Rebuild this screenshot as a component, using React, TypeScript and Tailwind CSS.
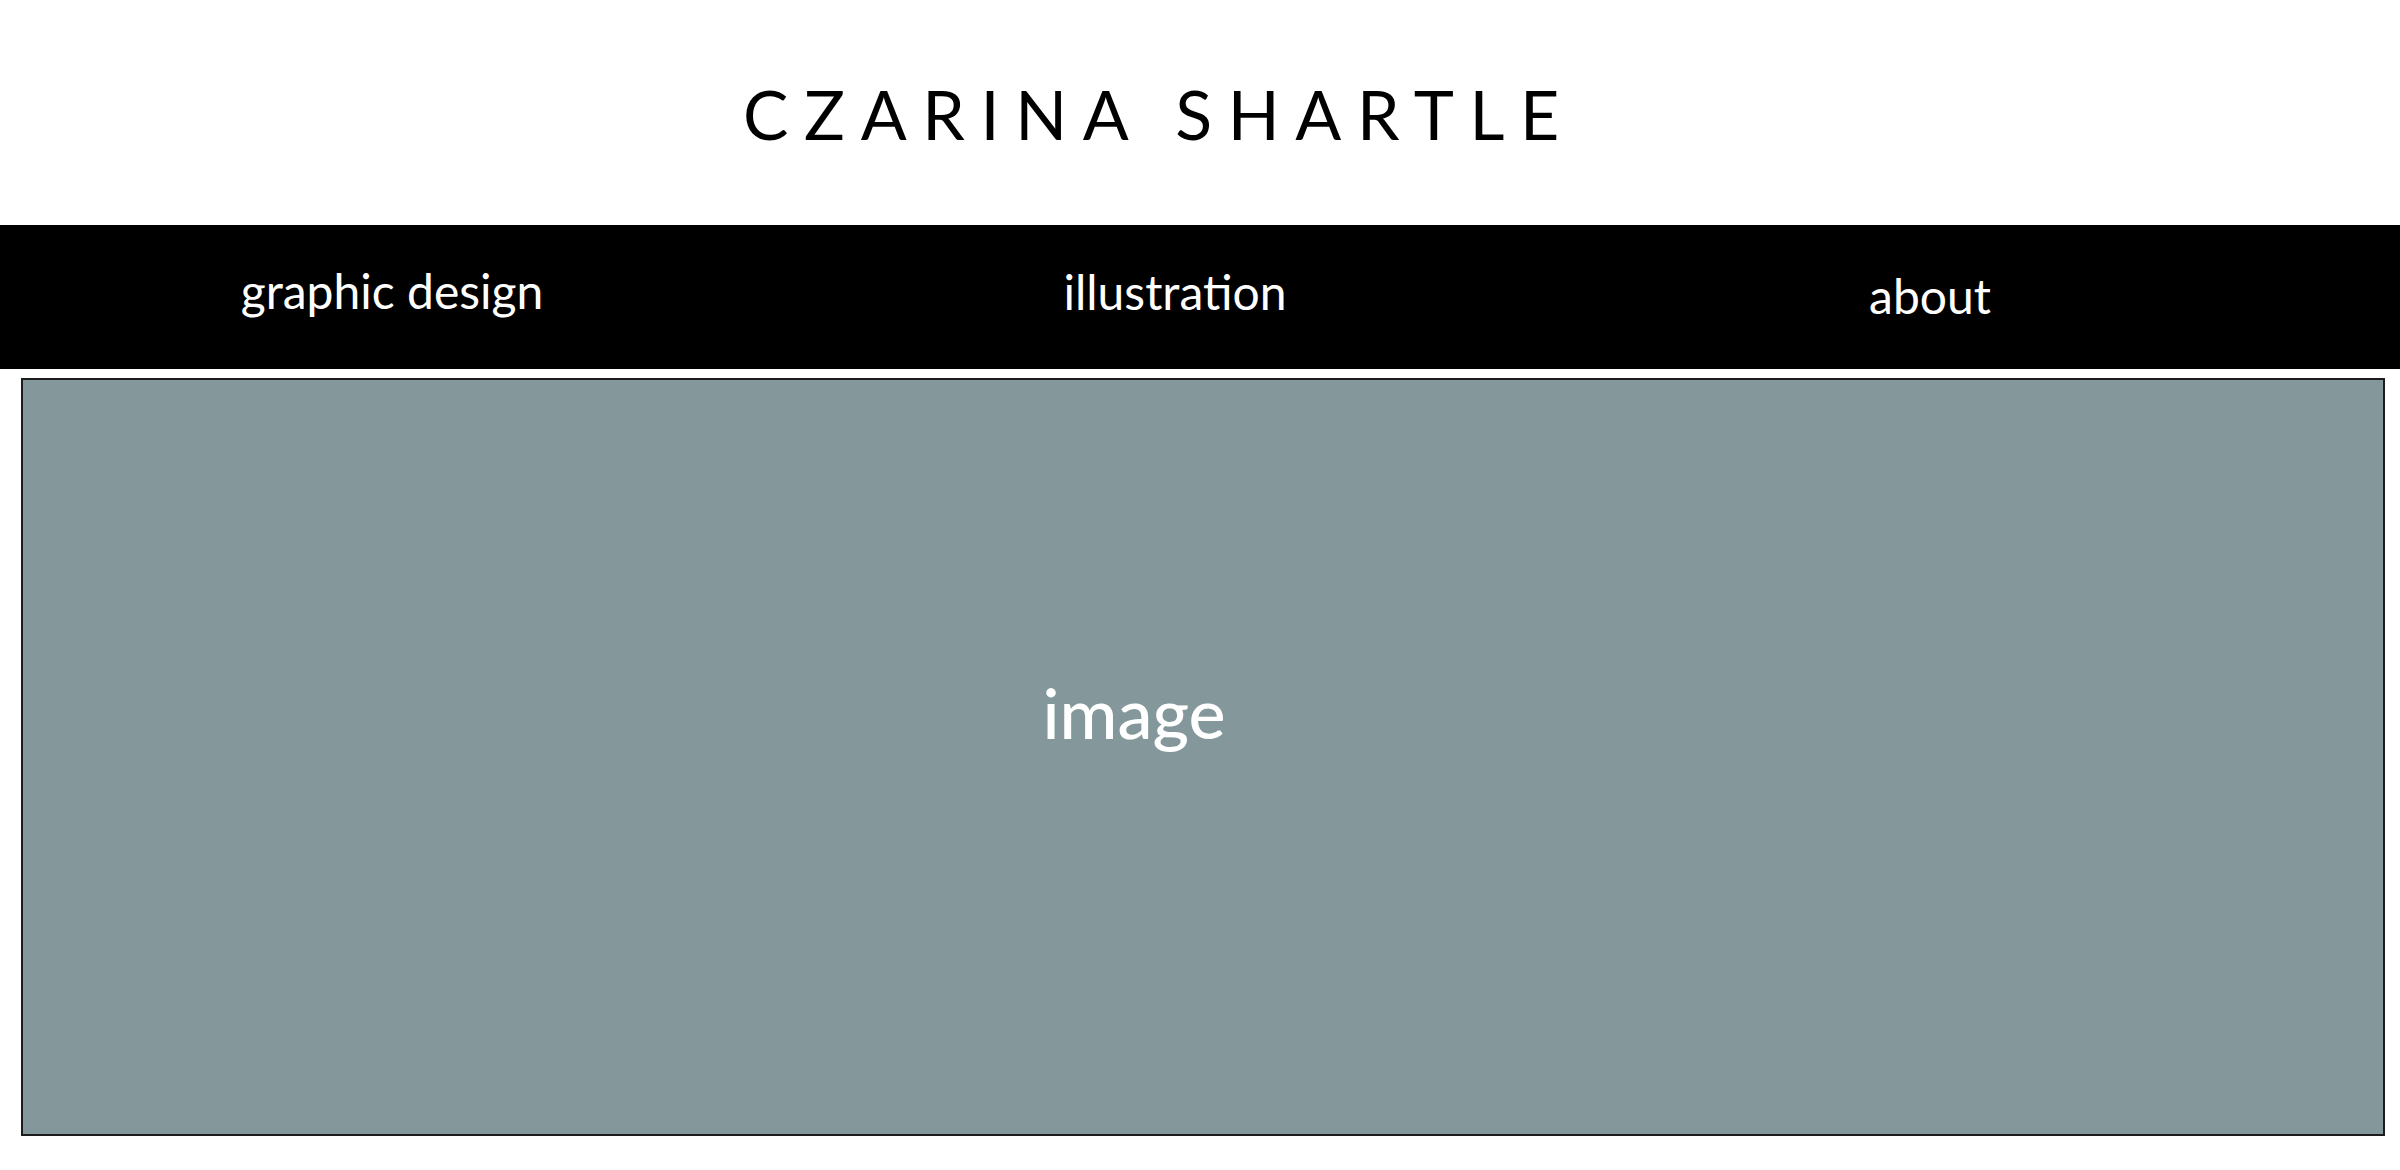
export default function App() {
    return (
        <div className="min-h-screen bg-white" style={{fontFamily: "Lato, 'Noto Sans', sans-serif"}}>
            {/* Header */}
            <header className="h-[225px] flex items-center justify-center">
                <h1 className="text-[68px] leading-none font-normal tracking-[0.23em] text-black pr-[82px] mt-[2px]">
                    CZARINA SHARTLE
                </h1>
            </header>

            {/* Nav */}
            <nav className="h-[144px] bg-black grid grid-cols-[784px_782px_728px] items-center text-white text-[48px] leading-none">
                <a className="text-center -mt-[12px]">graphic design</a>
                <a className="text-center -mt-[10px]">illustration</a>
                <a className="text-center -mt-[2px]">about</a>
            </nav>

            {/* Hero */}
            <section className="pt-[9px] pl-[21px] pr-[15px]">
                <div className="h-[758px] bg-[#84989b] border-2 border-[#1c1c1c] flex items-center justify-center pr-[138px]">
                    <span className="text-white text-[70px] leading-none font-medium mt-[-90px]">image</span>
                </div>
            </section>
        </div>
    );
}
